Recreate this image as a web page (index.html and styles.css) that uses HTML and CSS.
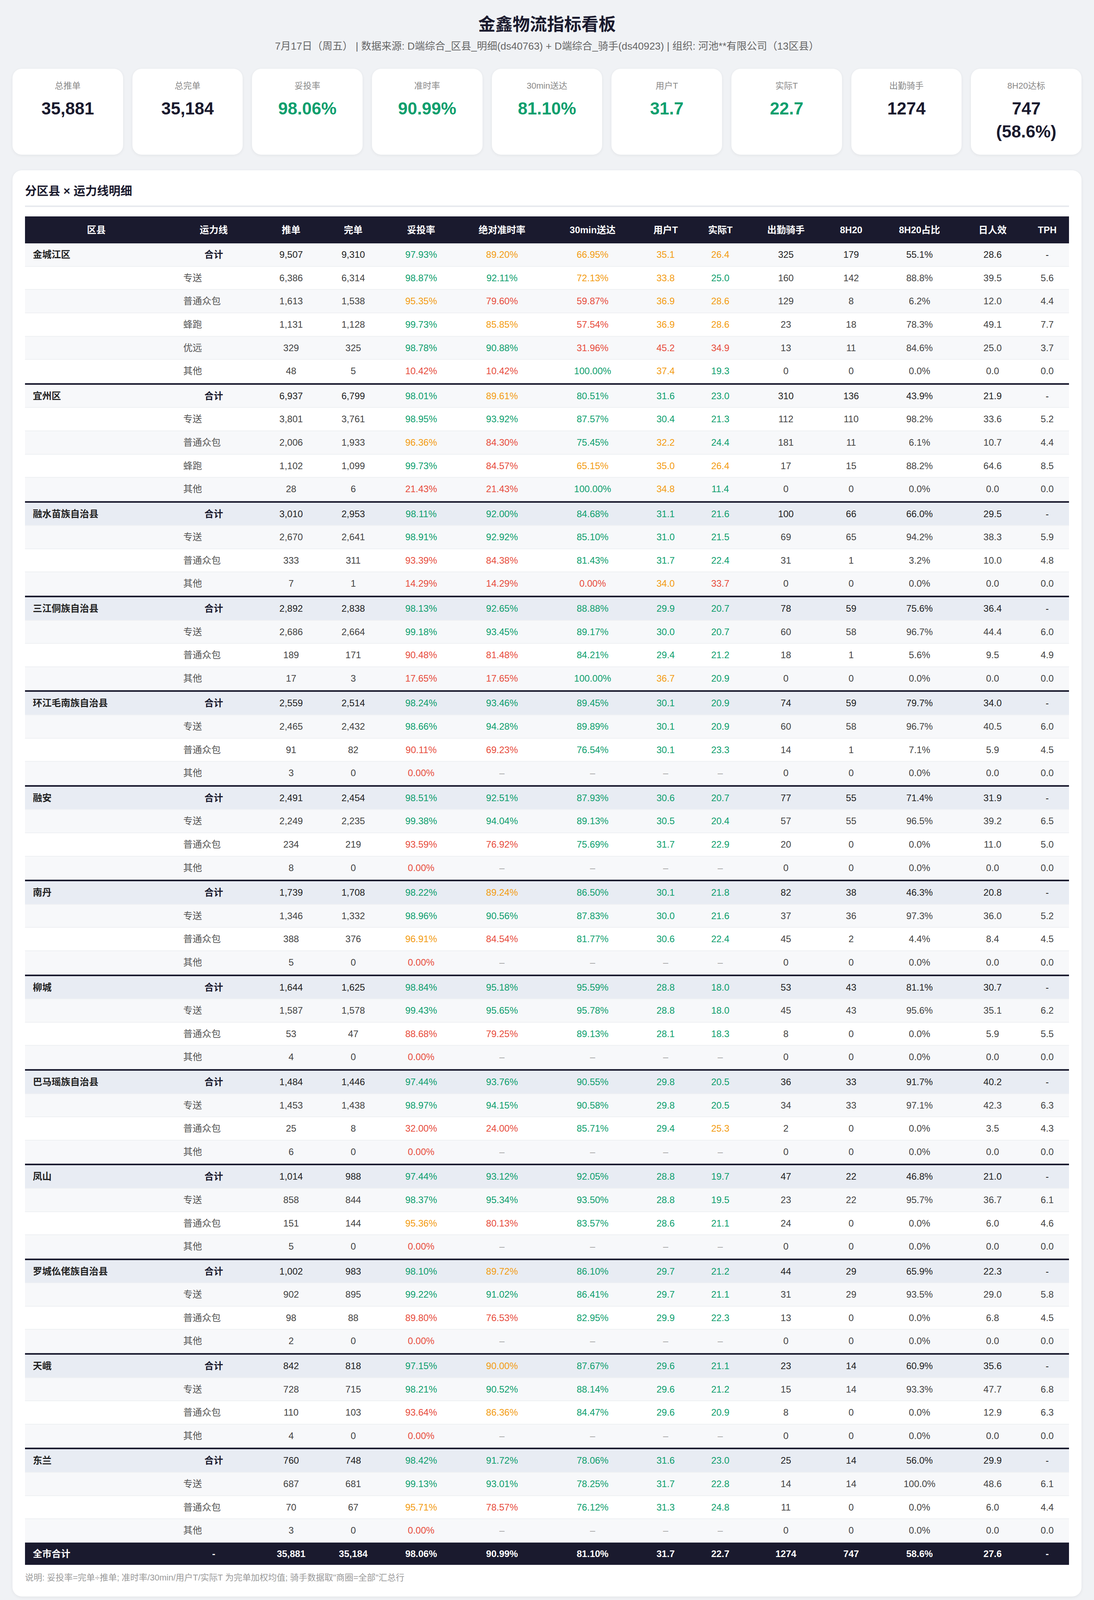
FILE: index.html
```html
<!DOCTYPE html>
<html lang="zh-CN">
<head>
<meta charset="utf-8">
<title>金鑫物流指标看板</title>
<link rel="stylesheet" href="styles.css">
</head>
<body>
<div class="page">
  <header class="header">
    <h1 class="title">金鑫物流指标看板</h1>
    <p class="subtitle">7月17日（周五） | 数据来源: D端综合_区县_明细(ds40763) + D端综合_骑手(ds40923) | 组织: 河池**有限公司（13区县）</p>
  </header>

  <section class="kpis">
    <div class="kpi"><div class="kpi-label">总推单</div><div class="kpi-value">35,881</div></div>
    <div class="kpi"><div class="kpi-label">总完单</div><div class="kpi-value">35,184</div></div>
    <div class="kpi"><div class="kpi-label">妥投率</div><div class="kpi-value good">98.06%</div></div>
    <div class="kpi"><div class="kpi-label">准时率</div><div class="kpi-value good">90.99%</div></div>
    <div class="kpi"><div class="kpi-label">30min送达</div><div class="kpi-value good">81.10%</div></div>
    <div class="kpi"><div class="kpi-label">用户T</div><div class="kpi-value good">31.7</div></div>
    <div class="kpi"><div class="kpi-label">实际T</div><div class="kpi-value good">22.7</div></div>
    <div class="kpi"><div class="kpi-label">出勤骑手</div><div class="kpi-value">1274</div></div>
    <div class="kpi"><div class="kpi-label">8H20达标</div><div class="kpi-value">747 (58.6%)</div></div>
  </section>

  <section class="card">
    <h2 class="card-title">分区县 × 运力线明细</h2>
    <table class="data detail">
      <colgroup>
        <col class="w-county"><col class="w-line"><col class="w-push"><col class="w-done"><col class="w-rate"><col class="w-ontime"><col class="w-30"><col class="w-ut"><col class="w-at"><col class="w-rider"><col class="w-8h"><col class="w-8hp"><col class="w-eff"><col class="w-tph">
      </colgroup>
      <thead>
        <tr><th>区县</th><th>运力线</th><th>推单</th><th>完单</th><th>妥投率</th><th>绝对准时率</th><th>30min送达</th><th>用户T</th><th>实际T</th><th>出勤骑手</th><th>8H20</th><th>8H20占比</th><th>日人效</th><th>TPH</th></tr>
      </thead>
      <tbody>
        <tr class="sum"><td class="name">金城江区</td><td class="tot">合计</td><td>9,507</td><td>9,310</td><td class="g">97.93%</td><td class="o">89.20%</td><td class="o">66.95%</td><td class="o">35.1</td><td class="o">26.4</td><td>325</td><td>179</td><td>55.1%</td><td>28.6</td><td>-</td></tr>
        <tr><td></td><td class="line">专送</td><td>6,386</td><td>6,314</td><td class="g">98.87%</td><td class="g">92.11%</td><td class="o">72.13%</td><td class="o">33.8</td><td class="g">25.0</td><td>160</td><td>142</td><td>88.8%</td><td>39.5</td><td>5.6</td></tr>
        <tr><td></td><td class="line">普通众包</td><td>1,613</td><td>1,538</td><td class="o">95.35%</td><td class="r">79.60%</td><td class="r">59.87%</td><td class="o">36.9</td><td class="o">28.6</td><td>129</td><td>8</td><td>6.2%</td><td>12.0</td><td>4.4</td></tr>
        <tr><td></td><td class="line">蜂跑</td><td>1,131</td><td>1,128</td><td class="g">99.73%</td><td class="o">85.85%</td><td class="r">57.54%</td><td class="o">36.9</td><td class="o">28.6</td><td>23</td><td>18</td><td>78.3%</td><td>49.1</td><td>7.7</td></tr>
        <tr><td></td><td class="line">优远</td><td>329</td><td>325</td><td class="g">98.78%</td><td class="g">90.88%</td><td class="r">31.96%</td><td class="r">45.2</td><td class="r">34.9</td><td>13</td><td>11</td><td>84.6%</td><td>25.0</td><td>3.7</td></tr>
        <tr><td></td><td class="line">其他</td><td>48</td><td>5</td><td class="r">10.42%</td><td class="r">10.42%</td><td class="g">100.00%</td><td class="o">37.4</td><td class="g">19.3</td><td>0</td><td>0</td><td>0.0%</td><td>0.0</td><td>0.0</td></tr>

        <tr class="sum sep"><td class="name">宜州区</td><td class="tot">合计</td><td>6,937</td><td>6,799</td><td class="g">98.01%</td><td class="o">89.61%</td><td class="g">80.51%</td><td class="g">31.6</td><td class="g">23.0</td><td>310</td><td>136</td><td>43.9%</td><td>21.9</td><td>-</td></tr>
        <tr><td></td><td class="line">专送</td><td>3,801</td><td>3,761</td><td class="g">98.95%</td><td class="g">93.92%</td><td class="g">87.57%</td><td class="g">30.4</td><td class="g">21.3</td><td>112</td><td>110</td><td>98.2%</td><td>33.6</td><td>5.2</td></tr>
        <tr><td></td><td class="line">普通众包</td><td>2,006</td><td>1,933</td><td class="o">96.36%</td><td class="r">84.30%</td><td class="g">75.45%</td><td class="o">32.2</td><td class="g">24.4</td><td>181</td><td>11</td><td>6.1%</td><td>10.7</td><td>4.4</td></tr>
        <tr><td></td><td class="line">蜂跑</td><td>1,102</td><td>1,099</td><td class="g">99.73%</td><td class="r">84.57%</td><td class="o">65.15%</td><td class="o">35.0</td><td class="o">26.4</td><td>17</td><td>15</td><td>88.2%</td><td>64.6</td><td>8.5</td></tr>
        <tr><td></td><td class="line">其他</td><td>28</td><td>6</td><td class="r">21.43%</td><td class="r">21.43%</td><td class="g">100.00%</td><td class="o">34.8</td><td class="g">11.4</td><td>0</td><td>0</td><td>0.0%</td><td>0.0</td><td>0.0</td></tr>

        <tr class="sum sep"><td class="name">融水苗族自治县</td><td class="tot">合计</td><td>3,010</td><td>2,953</td><td class="g">98.11%</td><td class="g">92.00%</td><td class="g">84.68%</td><td class="g">31.1</td><td class="g">21.6</td><td>100</td><td>66</td><td>66.0%</td><td>29.5</td><td>-</td></tr>
        <tr><td></td><td class="line">专送</td><td>2,670</td><td>2,641</td><td class="g">98.91%</td><td class="g">92.92%</td><td class="g">85.10%</td><td class="g">31.0</td><td class="g">21.5</td><td>69</td><td>65</td><td>94.2%</td><td>38.3</td><td>5.9</td></tr>
        <tr><td></td><td class="line">普通众包</td><td>333</td><td>311</td><td class="r">93.39%</td><td class="r">84.38%</td><td class="g">81.43%</td><td class="g">31.7</td><td class="g">22.4</td><td>31</td><td>1</td><td>3.2%</td><td>10.0</td><td>4.8</td></tr>
        <tr><td></td><td class="line">其他</td><td>7</td><td>1</td><td class="r">14.29%</td><td class="r">14.29%</td><td class="r">0.00%</td><td class="o">34.0</td><td class="r">33.7</td><td>0</td><td>0</td><td>0.0%</td><td>0.0</td><td>0.0</td></tr>

        <tr class="sum sep"><td class="name">三江侗族自治县</td><td class="tot">合计</td><td>2,892</td><td>2,838</td><td class="g">98.13%</td><td class="g">92.65%</td><td class="g">88.88%</td><td class="g">29.9</td><td class="g">20.7</td><td>78</td><td>59</td><td>75.6%</td><td>36.4</td><td>-</td></tr>
        <tr><td></td><td class="line">专送</td><td>2,686</td><td>2,664</td><td class="g">99.18%</td><td class="g">93.45%</td><td class="g">89.17%</td><td class="g">30.0</td><td class="g">20.7</td><td>60</td><td>58</td><td>96.7%</td><td>44.4</td><td>6.0</td></tr>
        <tr><td></td><td class="line">普通众包</td><td>189</td><td>171</td><td class="r">90.48%</td><td class="r">81.48%</td><td class="g">84.21%</td><td class="g">29.4</td><td class="g">21.2</td><td>18</td><td>1</td><td>5.6%</td><td>9.5</td><td>4.9</td></tr>
        <tr><td></td><td class="line">其他</td><td>17</td><td>3</td><td class="r">17.65%</td><td class="r">17.65%</td><td class="g">100.00%</td><td class="o">36.7</td><td class="g">20.9</td><td>0</td><td>0</td><td>0.0%</td><td>0.0</td><td>0.0</td></tr>

        <tr class="sum sep"><td class="name">环江毛南族自治县</td><td class="tot">合计</td><td>2,559</td><td>2,514</td><td class="g">98.24%</td><td class="g">93.46%</td><td class="g">89.45%</td><td class="g">30.1</td><td class="g">20.9</td><td>74</td><td>59</td><td>79.7%</td><td>34.0</td><td>-</td></tr>
        <tr><td></td><td class="line">专送</td><td>2,465</td><td>2,432</td><td class="g">98.66%</td><td class="g">94.28%</td><td class="g">89.89%</td><td class="g">30.1</td><td class="g">20.9</td><td>60</td><td>58</td><td>96.7%</td><td>40.5</td><td>6.0</td></tr>
        <tr><td></td><td class="line">普通众包</td><td>91</td><td>82</td><td class="r">90.11%</td><td class="r">69.23%</td><td class="g">76.54%</td><td class="g">30.1</td><td class="g">23.3</td><td>14</td><td>1</td><td>7.1%</td><td>5.9</td><td>4.5</td></tr>
        <tr><td></td><td class="line">其他</td><td>3</td><td>0</td><td class="r">0.00%</td><td class="dash">–</td><td class="dash">–</td><td class="dash">–</td><td class="dash">–</td><td>0</td><td>0</td><td>0.0%</td><td>0.0</td><td>0.0</td></tr>

        <tr class="sum sep"><td class="name">融安</td><td class="tot">合计</td><td>2,491</td><td>2,454</td><td class="g">98.51%</td><td class="g">92.51%</td><td class="g">87.93%</td><td class="g">30.6</td><td class="g">20.7</td><td>77</td><td>55</td><td>71.4%</td><td>31.9</td><td>-</td></tr>
        <tr><td></td><td class="line">专送</td><td>2,249</td><td>2,235</td><td class="g">99.38%</td><td class="g">94.04%</td><td class="g">89.13%</td><td class="g">30.5</td><td class="g">20.4</td><td>57</td><td>55</td><td>96.5%</td><td>39.2</td><td>6.5</td></tr>
        <tr><td></td><td class="line">普通众包</td><td>234</td><td>219</td><td class="r">93.59%</td><td class="r">76.92%</td><td class="g">75.69%</td><td class="g">31.7</td><td class="g">22.9</td><td>20</td><td>0</td><td>0.0%</td><td>11.0</td><td>5.0</td></tr>
        <tr><td></td><td class="line">其他</td><td>8</td><td>0</td><td class="r">0.00%</td><td class="dash">–</td><td class="dash">–</td><td class="dash">–</td><td class="dash">–</td><td>0</td><td>0</td><td>0.0%</td><td>0.0</td><td>0.0</td></tr>

        <tr class="sum sep"><td class="name">南丹</td><td class="tot">合计</td><td>1,739</td><td>1,708</td><td class="g">98.22%</td><td class="o">89.24%</td><td class="g">86.50%</td><td class="g">30.1</td><td class="g">21.8</td><td>82</td><td>38</td><td>46.3%</td><td>20.8</td><td>-</td></tr>
        <tr><td></td><td class="line">专送</td><td>1,346</td><td>1,332</td><td class="g">98.96%</td><td class="g">90.56%</td><td class="g">87.83%</td><td class="g">30.0</td><td class="g">21.6</td><td>37</td><td>36</td><td>97.3%</td><td>36.0</td><td>5.2</td></tr>
        <tr><td></td><td class="line">普通众包</td><td>388</td><td>376</td><td class="o">96.91%</td><td class="r">84.54%</td><td class="g">81.77%</td><td class="g">30.6</td><td class="g">22.4</td><td>45</td><td>2</td><td>4.4%</td><td>8.4</td><td>4.5</td></tr>
        <tr><td></td><td class="line">其他</td><td>5</td><td>0</td><td class="r">0.00%</td><td class="dash">–</td><td class="dash">–</td><td class="dash">–</td><td class="dash">–</td><td>0</td><td>0</td><td>0.0%</td><td>0.0</td><td>0.0</td></tr>

        <tr class="sum sep"><td class="name">柳城</td><td class="tot">合计</td><td>1,644</td><td>1,625</td><td class="g">98.84%</td><td class="g">95.18%</td><td class="g">95.59%</td><td class="g">28.8</td><td class="g">18.0</td><td>53</td><td>43</td><td>81.1%</td><td>30.7</td><td>-</td></tr>
        <tr><td></td><td class="line">专送</td><td>1,587</td><td>1,578</td><td class="g">99.43%</td><td class="g">95.65%</td><td class="g">95.78%</td><td class="g">28.8</td><td class="g">18.0</td><td>45</td><td>43</td><td>95.6%</td><td>35.1</td><td>6.2</td></tr>
        <tr><td></td><td class="line">普通众包</td><td>53</td><td>47</td><td class="r">88.68%</td><td class="r">79.25%</td><td class="g">89.13%</td><td class="g">28.1</td><td class="g">18.3</td><td>8</td><td>0</td><td>0.0%</td><td>5.9</td><td>5.5</td></tr>
        <tr><td></td><td class="line">其他</td><td>4</td><td>0</td><td class="r">0.00%</td><td class="dash">–</td><td class="dash">–</td><td class="dash">–</td><td class="dash">–</td><td>0</td><td>0</td><td>0.0%</td><td>0.0</td><td>0.0</td></tr>

        <tr class="sum sep"><td class="name">巴马瑶族自治县</td><td class="tot">合计</td><td>1,484</td><td>1,446</td><td class="g">97.44%</td><td class="g">93.76%</td><td class="g">90.55%</td><td class="g">29.8</td><td class="g">20.5</td><td>36</td><td>33</td><td>91.7%</td><td>40.2</td><td>-</td></tr>
        <tr><td></td><td class="line">专送</td><td>1,453</td><td>1,438</td><td class="g">98.97%</td><td class="g">94.15%</td><td class="g">90.58%</td><td class="g">29.8</td><td class="g">20.5</td><td>34</td><td>33</td><td>97.1%</td><td>42.3</td><td>6.3</td></tr>
        <tr><td></td><td class="line">普通众包</td><td>25</td><td>8</td><td class="r">32.00%</td><td class="r">24.00%</td><td class="g">85.71%</td><td class="g">29.4</td><td class="o">25.3</td><td>2</td><td>0</td><td>0.0%</td><td>3.5</td><td>4.3</td></tr>
        <tr><td></td><td class="line">其他</td><td>6</td><td>0</td><td class="r">0.00%</td><td class="dash">–</td><td class="dash">–</td><td class="dash">–</td><td class="dash">–</td><td>0</td><td>0</td><td>0.0%</td><td>0.0</td><td>0.0</td></tr>

        <tr class="sum sep"><td class="name">凤山</td><td class="tot">合计</td><td>1,014</td><td>988</td><td class="g">97.44%</td><td class="g">93.12%</td><td class="g">92.05%</td><td class="g">28.8</td><td class="g">19.7</td><td>47</td><td>22</td><td>46.8%</td><td>21.0</td><td>-</td></tr>
        <tr><td></td><td class="line">专送</td><td>858</td><td>844</td><td class="g">98.37%</td><td class="g">95.34%</td><td class="g">93.50%</td><td class="g">28.8</td><td class="g">19.5</td><td>23</td><td>22</td><td>95.7%</td><td>36.7</td><td>6.1</td></tr>
        <tr><td></td><td class="line">普通众包</td><td>151</td><td>144</td><td class="o">95.36%</td><td class="r">80.13%</td><td class="g">83.57%</td><td class="g">28.6</td><td class="g">21.1</td><td>24</td><td>0</td><td>0.0%</td><td>6.0</td><td>4.6</td></tr>
        <tr><td></td><td class="line">其他</td><td>5</td><td>0</td><td class="r">0.00%</td><td class="dash">–</td><td class="dash">–</td><td class="dash">–</td><td class="dash">–</td><td>0</td><td>0</td><td>0.0%</td><td>0.0</td><td>0.0</td></tr>

        <tr class="sum sep"><td class="name">罗城仫佬族自治县</td><td class="tot">合计</td><td>1,002</td><td>983</td><td class="g">98.10%</td><td class="o">89.72%</td><td class="g">86.10%</td><td class="g">29.7</td><td class="g">21.2</td><td>44</td><td>29</td><td>65.9%</td><td>22.3</td><td>-</td></tr>
        <tr><td></td><td class="line">专送</td><td>902</td><td>895</td><td class="g">99.22%</td><td class="g">91.02%</td><td class="g">86.41%</td><td class="g">29.7</td><td class="g">21.1</td><td>31</td><td>29</td><td>93.5%</td><td>29.0</td><td>5.8</td></tr>
        <tr><td></td><td class="line">普通众包</td><td>98</td><td>88</td><td class="r">89.80%</td><td class="r">76.53%</td><td class="g">82.95%</td><td class="g">29.9</td><td class="g">22.3</td><td>13</td><td>0</td><td>0.0%</td><td>6.8</td><td>4.5</td></tr>
        <tr><td></td><td class="line">其他</td><td>2</td><td>0</td><td class="r">0.00%</td><td class="dash">–</td><td class="dash">–</td><td class="dash">–</td><td class="dash">–</td><td>0</td><td>0</td><td>0.0%</td><td>0.0</td><td>0.0</td></tr>

        <tr class="sum sep"><td class="name">天峨</td><td class="tot">合计</td><td>842</td><td>818</td><td class="g">97.15%</td><td class="o">90.00%</td><td class="g">87.67%</td><td class="g">29.6</td><td class="g">21.1</td><td>23</td><td>14</td><td>60.9%</td><td>35.6</td><td>-</td></tr>
        <tr><td></td><td class="line">专送</td><td>728</td><td>715</td><td class="g">98.21%</td><td class="g">90.52%</td><td class="g">88.14%</td><td class="g">29.6</td><td class="g">21.2</td><td>15</td><td>14</td><td>93.3%</td><td>47.7</td><td>6.8</td></tr>
        <tr><td></td><td class="line">普通众包</td><td>110</td><td>103</td><td class="r">93.64%</td><td class="o">86.36%</td><td class="g">84.47%</td><td class="g">29.6</td><td class="g">20.9</td><td>8</td><td>0</td><td>0.0%</td><td>12.9</td><td>6.3</td></tr>
        <tr><td></td><td class="line">其他</td><td>4</td><td>0</td><td class="r">0.00%</td><td class="dash">–</td><td class="dash">–</td><td class="dash">–</td><td class="dash">–</td><td>0</td><td>0</td><td>0.0%</td><td>0.0</td><td>0.0</td></tr>

        <tr class="sum sep"><td class="name">东兰</td><td class="tot">合计</td><td>760</td><td>748</td><td class="g">98.42%</td><td class="g">91.72%</td><td class="g">78.06%</td><td class="g">31.6</td><td class="g">23.0</td><td>25</td><td>14</td><td>56.0%</td><td>29.9</td><td>-</td></tr>
        <tr><td></td><td class="line">专送</td><td>687</td><td>681</td><td class="g">99.13%</td><td class="g">93.01%</td><td class="g">78.25%</td><td class="g">31.7</td><td class="g">22.8</td><td>14</td><td>14</td><td>100.0%</td><td>48.6</td><td>6.1</td></tr>
        <tr><td></td><td class="line">普通众包</td><td>70</td><td>67</td><td class="o">95.71%</td><td class="r">78.57%</td><td class="g">76.12%</td><td class="g">31.3</td><td class="g">24.8</td><td>11</td><td>0</td><td>0.0%</td><td>6.0</td><td>4.4</td></tr>
        <tr><td></td><td class="line">其他</td><td>3</td><td>0</td><td class="r">0.00%</td><td class="dash">–</td><td class="dash">–</td><td class="dash">–</td><td class="dash">–</td><td>0</td><td>0</td><td>0.0%</td><td>0.0</td><td>0.0</td></tr>

        <tr class="total"><td class="name">全市合计</td><td>-</td><td>35,881</td><td>35,184</td><td>98.06%</td><td>90.99%</td><td>81.10%</td><td>31.7</td><td>22.7</td><td>1274</td><td>747</td><td>58.6%</td><td>27.6</td><td>-</td></tr>
      </tbody>
    </table>
    <p class="note">说明: 妥投率=完单÷推单; 准时率/30min/用户T/实际T 为完单加权均值; 骑手数据取"商圈=全部"汇总行</p>
  </section>

  <section class="card">
    <h2 class="card-title">区县汇总（全运力线合计）</h2>
    <table class="data summary">
      <colgroup>
        <col class="s-county"><col class="s-push"><col class="s-done"><col class="s-rate"><col class="s-ontime"><col class="s-30"><col class="s-ut"><col class="s-at"><col class="s-rider"><col class="s-8h"><col class="s-8hp"><col class="s-eff">
      </colgroup>
      <thead>
        <tr><th>区县</th><th>推单</th><th>完单</th><th>妥投率</th><th>准时率</th><th>30min</th><th>用户T</th><th>实际T</th><th>出勤骑手</th><th>8H20</th><th>8H20占比</th><th>日人效</th></tr>
      </thead>
      <tbody>
        <tr><td class="name">金城江区</td><td>9,507</td><td>9,310</td><td class="g">97.93%</td><td class="o">89.20%</td><td class="o">66.95%</td><td class="o">35.1</td><td class="o">26.4</td><td>325</td><td>179</td><td>55.1%</td><td>28.6</td></tr>
        <tr><td class="name">宜州区</td><td>6,937</td><td>6,799</td><td class="g">98.01%</td><td class="o">89.61%</td><td class="g">80.51%</td><td class="g">31.6</td><td class="g">23.0</td><td>310</td><td>136</td><td>43.9%</td><td>21.9</td></tr>
        <tr><td class="name">融水苗族自治县</td><td>3,010</td><td>2,953</td><td class="g">98.11%</td><td class="g">92.00%</td><td class="g">84.68%</td><td class="g">31.1</td><td class="g">21.6</td><td>100</td><td>66</td><td>66.0%</td><td>29.5</td></tr>
        <tr><td class="name">三江侗族自治县</td><td>2,892</td><td>2,838</td><td class="g">98.13%</td><td class="g">92.65%</td><td class="g">88.88%</td><td class="g">29.9</td><td class="g">20.7</td><td>78</td><td>59</td><td>75.6%</td><td>36.4</td></tr>
        <tr><td class="name">环江毛南族自治县</td><td>2,559</td><td>2,514</td><td class="g">98.24%</td><td class="g">93.46%</td><td class="g">89.45%</td><td class="g">30.1</td><td class="g">20.9</td><td>74</td><td>59</td><td>79.7%</td><td>34.0</td></tr>
        <tr><td class="name">融安</td><td>2,491</td><td>2,454</td><td class="g">98.51%</td><td class="g">92.51%</td><td class="g">87.93%</td><td class="g">30.6</td><td class="g">20.7</td><td>77</td><td>55</td><td>71.4%</td><td>31.9</td></tr>
        <tr><td class="name">南丹</td><td>1,739</td><td>1,708</td><td class="g">98.22%</td><td class="o">89.24%</td><td class="g">86.50%</td><td class="g">30.1</td><td class="g">21.8</td><td>82</td><td>38</td><td>46.3%</td><td>20.8</td></tr>
        <tr><td class="name">柳城</td><td>1,644</td><td>1,625</td><td class="g">98.84%</td><td class="g">95.18%</td><td class="g">95.59%</td><td class="g">28.8</td><td class="g">18.0</td><td>53</td><td>43</td><td>81.1%</td><td>30.7</td></tr>
        <tr><td class="name">巴马瑶族自治县</td><td>1,484</td><td>1,446</td><td class="g">97.44%</td><td class="g">93.76%</td><td class="g">90.55%</td><td class="g">29.8</td><td class="g">20.5</td><td>36</td><td>33</td><td>91.7%</td><td>40.2</td></tr>
        <tr><td class="name">凤山</td><td>1,014</td><td>988</td><td class="g">97.44%</td><td class="g">93.12%</td><td class="g">92.05%</td><td class="g">28.8</td><td class="g">19.7</td><td>47</td><td>22</td><td>46.8%</td><td>21.0</td></tr>
        <tr><td class="name">罗城仫佬族自治县</td><td>1,002</td><td>983</td><td class="g">98.10%</td><td class="o">89.72%</td><td class="g">86.10%</td><td class="g">29.7</td><td class="g">21.2</td><td>44</td><td>29</td><td>65.9%</td><td>22.3</td></tr>
        <tr><td class="name">天峨</td><td>842</td><td>818</td><td class="g">97.15%</td><td class="o">90.00%</td><td class="g">87.67%</td><td class="g">29.6</td><td class="g">21.1</td><td>23</td><td>14</td><td>60.9%</td><td>35.6</td></tr>
        <tr><td class="name">东兰</td><td>760</td><td>748</td><td class="g">98.42%</td><td class="g">91.72%</td><td class="g">78.06%</td><td class="g">31.6</td><td class="g">23.0</td><td>25</td><td>14</td><td>56.0%</td><td>29.9</td></tr>
        <tr class="total"><td>全市合计</td><td>35,881</td><td>35,184</td><td>98.06%</td><td>90.99%</td><td>81.10%</td><td>31.7</td><td>22.7</td><td>1274</td><td>747</td><td>58.6%</td><td>27.6</td></tr>
      </tbody>
    </table>
  </section>

  <section class="card brief">
    <h2 class="card-title brief-title">7月17日（周五）物流指标简报</h2>
    <h3 class="sub hl">亮点</h3>
    <p class="text">全市推单35,881.0、完单35,184.0，妥投率98.06%整体稳健。柳城30min送达率95.59%、用户T 28.8min领跑全市；凤山准时率93.12%、30min 92.05%表现优异；巴马瑶族自治县准时率93.76%、30min 90.55%表现优异。专送妥投率普遍98%+，8H20达标率多数区县90%以上，骑手出勤质量较好。</p>
    <h3 class="sub warn">待关注</h3>
    <ul class="issues">
      <li>蜂跑/优远30min送达率偏低：金城江区蜂跑57.54%，金城江区优远31.96%，拉低全市30min指标（81.10%）。</li>
      <li>众包8H20达标率偏低：金城江区6.2%、宜州区6.1%、融水苗族自治县3.2%、三江侗族自治县5.6%，反映众包骑手有效工时不足。</li>
    </ul>
  </section>

  <footer class="footer">生成时间: 2026-07-16 | 数据日期: 7月17日（周五） | 妥投率=完单÷推单; 准时率/30min/用户T/实际T为完单加权均值; 骑手数据取"商圈=全部"汇总行 | 组织: 河池**有限公司（13区县）</footer>
</div>
</body>
</html>
```

FILE: styles.css
```css
* { box-sizing: border-box; }

body {
  margin: 0;
  background: #f0f2f5;
  font-family: "Liberation Sans", "Noto Sans CJK SC", sans-serif;
  color: #333;
}

.page {
  padding: 32px 32px 30px;
}

/* ---------- header ---------- */
.header {
  text-align: center;
  margin-bottom: 40px;
}

.title {
  margin: 0;
  font-size: 44px;
  line-height: 1.4;
  font-weight: 700;
  color: #1a1a2e;
}

.subtitle {
  margin: 6px 0 0;
  font-size: 26px;
  line-height: 1.4;
  color: #666;
}

/* ---------- KPI cards ---------- */
.kpis {
  display: grid;
  grid-template-columns: repeat(9, 1fr);
  gap: 24px;
  margin-bottom: 40px;
}

.kpi {
  background: #fff;
  border-radius: 24px;
  padding: 29px 28px;
  text-align: center;
  box-shadow: 0 2px 8px rgba(0, 0, 0, 0.06);
}

.kpi-label {
  font-size: 22px;
  line-height: 1.4;
  color: #888;
  margin-bottom: 12px;
}

.kpi-value {
  font-size: 44px;
  line-height: 1.35;
  font-weight: 700;
  color: #1a1a2e;
}

.kpi-value.good { color: #0e9f6e; }

/* ---------- section cards ---------- */
.card {
  background: #fff;
  border-radius: 24px;
  padding: 32px;
  margin-bottom: 32px;
  box-shadow: 0 2px 8px rgba(0, 0, 0, 0.06);
}

.card-title {
  margin: 0 0 24px;
  padding-bottom: 16px;
  border-bottom: 4px solid #e8eaef;
  font-size: 30px;
  line-height: 1.4;
  font-weight: 700;
  color: #1a1a2e;
}

/* ---------- tables ---------- */
.data {
  width: 100%;
  table-layout: fixed;
  border-collapse: separate;
  border-spacing: 0;
  font-size: 24px;
  line-height: 1.4;
}

.detail .w-county { width: 13.66%; }
.detail .w-line   { width: 8.83%; }
.detail .w-push   { width: 6.0%; }
.detail .w-done   { width: 5.9%; }
.detail .w-rate   { width: 7.11%; }
.detail .w-ontime { width: 8.38%; }
.detail .w-30     { width: 8.98%; }
.detail .w-ut     { width: 5.01%; }
.detail .w-at     { width: 5.46%; }
.detail .w-rider  { width: 7.11%; }
.detail .w-8h     { width: 5.39%; }
.detail .w-8hp    { width: 7.71%; }
.detail .w-eff    { width: 6.29%; }
.detail .w-tph    { width: 4.17%; }

.summary .s-county { width: 16.47%; }
.summary .s-push   { width: 7.04%; }
.summary .s-done   { width: 7.34%; }
.summary .s-rate   { width: 8.16%; }
.summary .s-ontime { width: 8.23%; }
.summary .s-30     { width: 8.23%; }
.summary .s-ut     { width: 6.29%; }
.summary .s-at     { width: 6.51%; }
.summary .s-rider  { width: 8.68%; }
.summary .s-8h     { width: 6.29%; }
.summary .s-8hp    { width: 9.66%; }
.summary .s-eff    { width: 7.1%; }

.data th {
  background: #1a1a2e;
  color: #fff;
  font-weight: 700;
  padding: 18px 20px;
  text-align: center;
  white-space: nowrap;
}

.data td {
  padding: 12px 20px;
  text-align: center;
  border-bottom: 2px solid #eef0f3;
  color: #444;
  white-space: nowrap;
}

.data tbody tr:nth-child(odd) td { background: #f7f8fa; }

.data tr.sum td {
  background: #e8ecf3;
  color: #222;
}

.data tr.sep td { border-top: 4px solid #1a1a2e; }

.data td.name {
  text-align: left;
  font-weight: 700;
  color: #1a1a2e;
}

.data td.line {
  text-align: left;
  padding-left: 40px;
  color: #555;
}

.data tr td.tot {
  font-weight: 700;
  color: #1a1a2e;
}

.data tr td.g { color: #0e9f6e; }
.data tr td.o { color: #f39c12; }
.data tr td.r { color: #e74c3c; }
.data tr td.dash { color: #999; }

.data tr.total td {
  background: #1a1a2e;
  color: #fff;
  font-weight: 700;
  border-bottom: none;
}

.data tr.total td.name { color: #fff; }

.note {
  margin: 18px 0 0;
  font-size: 22px;
  line-height: 1.4;
  color: #999;
}

/* ---------- brief ---------- */
.brief { padding: 40px; }

.brief-title {
  font-size: 32px;
  border-bottom-color: #1a1a2e;
  margin-bottom: 0;
}

.sub {
  margin: 28px 0 16px;
  font-size: 28px;
  line-height: 1.4;
  font-weight: 700;
}

.hl { color: #0e9f6e; }
.warn { color: #e74c3c; }

.text {
  margin: 0 0 32px;
  font-size: 26px;
  line-height: 1.8;
  color: #333;
}

.issues {
  list-style: none;
  margin: 24px 0 0;
  padding: 0 0 26px;
}

.issues li {
  position: relative;
  padding-left: 32px;
  margin-bottom: 16px;
  font-size: 26px;
  line-height: 1.8;
  color: #333;
}

.issues li::before {
  content: "";
  position: absolute;
  left: 0;
  top: 18px;
  width: 12px;
  height: 12px;
  border-radius: 50%;
  background: #e74c3c;
}

/* ---------- footer ---------- */
.footer {
  text-align: center;
  font-size: 22px;
  line-height: 1.4;
  color: #999;
}
```
